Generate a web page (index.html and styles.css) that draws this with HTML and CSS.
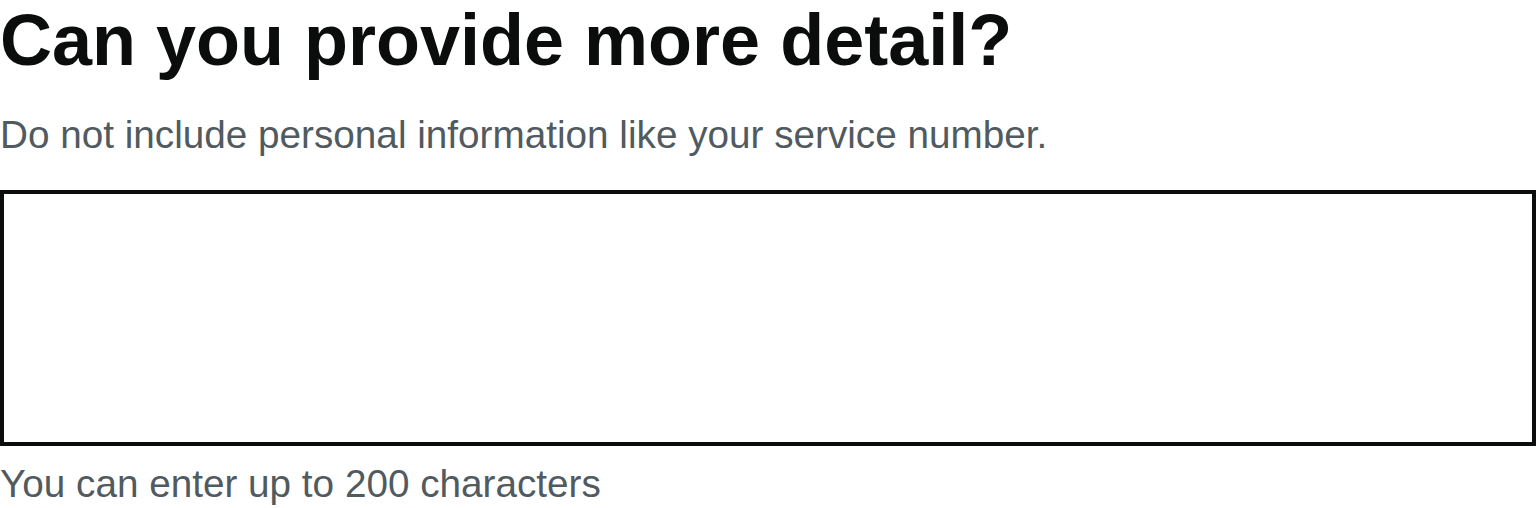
FILE: index.html
```html
<!DOCTYPE html>
<html lang="en">
<head>
<meta charset="utf-8">
<title>Can you provide more detail?</title>
<link rel="stylesheet" href="styles.css">
</head>
<body>
<div class="form-group">
  <h1 class="label-heading"><label class="label" for="more-detail">Can you provide more detail?</label></h1>
  <div class="hint" id="more-detail-hint">Do not include personal information like your service number.</div>
  <textarea class="textarea" id="more-detail" name="moreDetail" rows="5" aria-describedby="more-detail-hint more-detail-info"></textarea>
  <div class="count-message" id="more-detail-info">You can enter up to 200 characters</div>
</div>
</body>
</html>
```
FILE: styles.css
```css
html, body {
  margin: 0;
  padding: 0;
  background: #ffffff;
}

body {
  font-family: "Liberation Sans", Arial, sans-serif;
  color: #0b0c0c;
}

.form-group {
  display: flex;
  flex-direction: column;
}

.label-heading {
  margin: 0;
  font-size: 72px;
  line-height: 80px;
  font-weight: 700;
  color: #0b0c0c;
}

.label {
  display: block;
}

.hint {
  margin-top: 31px;
  font-size: 38.7px;
  line-height: 48px;
  color: #505a5f;
}

.textarea {
  display: block;
  box-sizing: border-box;
  width: 100%;
  height: 256px;
  margin: 31px 0 0 0;
  padding: 10px;
  border: 4px solid #0b0c0c;
  border-radius: 0;
  font-family: "Liberation Sans", Arial, sans-serif;
  font-size: 38.7px;
  line-height: 1.25;
  color: #0b0c0c;
  background: #ffffff;
  resize: none;
  outline: none;
}

.count-message {
  margin-top: 14px;
  font-size: 38.7px;
  line-height: 48px;
  color: #505a5f;
}
```
